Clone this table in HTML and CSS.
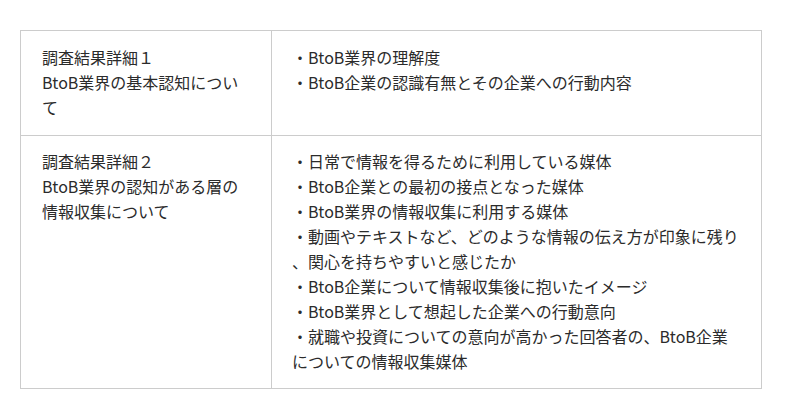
FILE: index.html
```html
<!DOCTYPE html>
<html lang="ja">
<head>
<meta charset="utf-8">
<link rel="stylesheet" href="styles.css">
</head>
<body>
<table class="survey">
  <tr>
    <td class="label">調査結果詳細１<br>BtoB業界の基本認知について</td>
    <td class="items">・BtoB業界の理解度<br>・BtoB企業の認識有無とその企業への行動内容</td>
  </tr>
  <tr>
    <td class="label">調査結果詳細２<br>BtoB業界の認知がある層の<br>情報収集について</td>
    <td class="items">・日常で情報を得るために利用している媒体<br>・BtoB企業との最初の接点となった媒体<br>・BtoB業界の情報収集に利用する媒体<br>・動画やテキストなど、どのような情報の伝え方が印象に残り、関心を持ちやすいと感じたか<br>・BtoB企業について情報収集後に抱いたイメージ<br>・BtoB業界として想起した企業への行動意向<br>・就職や投資についての意向が高かった回答者の、BtoB企業についての情報収集媒体</td>
  </tr>
</table>
</body>
</html>
```

FILE: styles.css
```css
html, body {
  margin: 0;
  padding: 0;
  background: #ffffff;
}
body {
  font-family: "Noto Sans CJK JP", "Noto Sans", sans-serif;
  font-size: 16px;
  color: #2b2b2b;
}
.survey {
  border-collapse: collapse;
  margin: 30px 0 0 20px;
  width: 742px;
  table-layout: fixed;
  border: 1px solid #dddddd;
}
.survey td {
  border: 1px solid #cccccc;
  padding: 14px 19px 15px 20px;
  line-height: 25px;
  vertical-align: top;
  line-break: anywhere;
}
.survey .label {
  width: 210px;
  padding-left: 21px;
}
.survey tr + tr td {
  padding-top: 13px;
  padding-bottom: 14px;
}
```
